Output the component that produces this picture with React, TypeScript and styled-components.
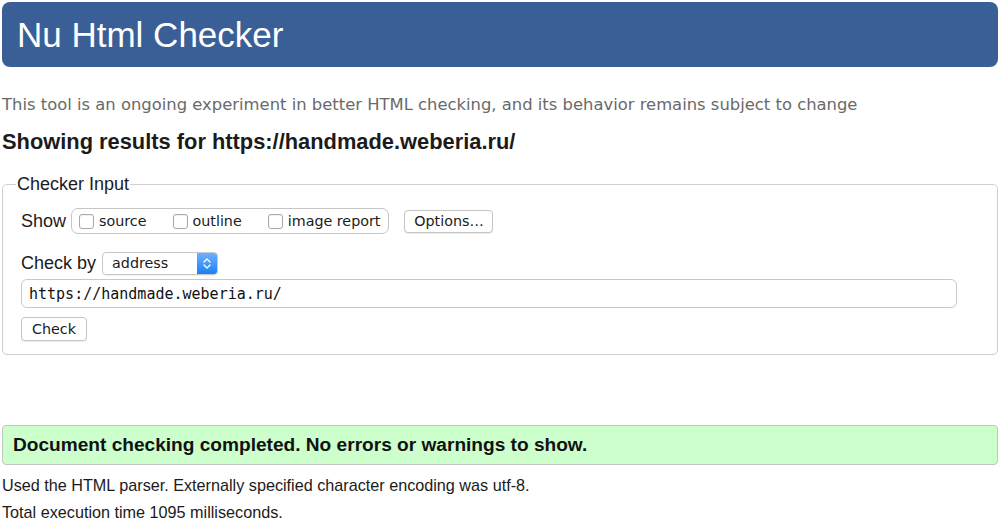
import React from "react";
import styled, { createGlobalStyle } from "styled-components";

const GlobalStyle = createGlobalStyle`
  html, body { margin: 0; padding: 0; background: #ffffff; }
  body {
    font-family: "Liberation Sans", Arial, Helvetica, sans-serif;
    color: #1b1b1b;
  }
  * { box-sizing: border-box; }
`;

const Page = styled.div`
  width: 1000px;
  padding: 2px 2px 0 2px;
`;

const Header = styled.header`
  height: 65px;
  background: #3a5f96;
  border-radius: 8px;
  display: flex;
  align-items: center;
  padding-left: 15px;
`;

const Title = styled.h1`
  margin: 0;
  font-size: 35px;
  line-height: 1;
  font-weight: normal;
  color: #ffffff;
`;

const Intro = styled.p`
  margin: 28px 0 0;
  font-family: "DejaVu Sans", Verdana, sans-serif;
  font-size: 16.4px;
  line-height: 20px;
  color: #6a6a6a;
`;

const Results = styled.h2`
  margin: 14px 0 0;
  font-size: 21.85px;
  line-height: 26px;
  font-weight: bold;
  color: #1b1b1b;
`;

const Fieldset = styled.fieldset`
  margin: 19px 0 0;
  padding: 0 18px 13px 18px;
  border: 1px solid #cfcfcf;
  border-radius: 5px;
  min-width: 0;
`;

const Legend = styled.legend`
  font-size: 18px;
  line-height: 20px;
  padding: 0 1px;
  margin-left: -5px;
  color: #1b1b1b;
`;

const Row = styled.div<{ $top: number }>`
  display: flex;
  align-items: center;
  height: 26px;
  margin-top: ${(p) => p.$top}px;
`;

const RowLabel = styled.span<{ $gap: number }>`
  font-size: 18px;
  margin-right: ${(p) => p.$gap}px;
  color: #1b1b1b;
`;

const CheckGroup = styled.div`
  display: inline-flex;
  align-items: center;
  gap: 26px;
  height: 26px;
  border: 1px solid #c6c6c6;
  border-radius: 7px;
  padding: 0 8px 0 7px;
`;

const CheckItem = styled.label`
  display: inline-flex;
  align-items: center;
  gap: 5px;
  font-family: "DejaVu Sans", Verdana, sans-serif;
  font-size: 14.3px;
  color: #1b1b1b;
`;

const Box = styled.input`
  appearance: none;
  -webkit-appearance: none;
  margin: 0;
  width: 15px;
  height: 15px;
  border: 1px solid #a8a8a8;
  border-radius: 3px;
  background: #ffffff;
  box-shadow: inset 0 1px 1px rgba(0, 0, 0, 0.06);
`;

const Button = styled.button<{ $w: number; $h: number }>`
  width: ${(p) => p.$w}px;
  height: ${(p) => p.$h}px;
  padding: 0;
  border: 1px solid #c5c5c5;
  border-radius: 4px;
  background: #ffffff;
  box-shadow: 0 1px 1px rgba(0, 0, 0, 0.08);
  font-family: "DejaVu Sans", Verdana, sans-serif;
  font-size: 14.3px;
  color: #1b1b1b;
`;

const OptionsButton = styled(Button)`
  margin-left: 15px;
`;

const SelectBox = styled.div`
  display: flex;
  width: 116px;
  height: 23px;
  border: 1px solid #c8c8c8;
  border-radius: 4px;
  overflow: hidden;
  box-shadow: 0 1px 1px rgba(0, 0, 0, 0.06);
`;

const SelectValue = styled.span`
  flex: 1;
  display: flex;
  align-items: center;
  padding-left: 9px;
  font-family: "DejaVu Sans", Verdana, sans-serif;
  font-size: 14.3px;
  color: #1b1b1b;
`;

const SelectArrow = styled.span`
  width: 20px;
  display: flex;
  align-items: center;
  justify-content: center;
  background: linear-gradient(#6db2fb, #1d7ff6);
`;

const UrlInput = styled.input`
  display: block;
  margin-top: 3px;
  width: 936px;
  height: 29px;
  padding: 0 7px;
  border: 1px solid #c8c8c8;
  border-radius: 6px;
  font-family: "DejaVu Sans Mono", Menlo, monospace;
  font-size: 15px;
  color: #111111;
  background: #ffffff;
  outline: none;
`;

const CheckButton = styled(Button)`
  display: block;
  margin-top: 9px;
`;

const Success = styled.div`
  margin-top: 70px;
  height: 40px;
  display: flex;
  align-items: center;
  padding: 0 10px;
  background: #ccffcc;
  border: 1px solid #bfc8bf;
  border-radius: 4px;
  font-size: 19.1px;
  font-weight: bold;
  color: #111111;
`;

const Info = styled.p<{ $top: number }>`
  margin: ${(p) => p.$top}px 0 0;
  font-size: 16.2px;
  line-height: 22px;
  color: #1b1b1b;
`;

export default function App() {
  return (
    <>
      <GlobalStyle />
      <Page>
        <Header>
          <Title>Nu Html Checker</Title>
        </Header>
        <Intro>
          This tool is an ongoing experiment in better HTML checking, and its behavior remains subject to change
        </Intro>
        <Results>Showing results for https://handmade.weberia.ru/</Results>
        <Fieldset>
          <Legend>Checker Input</Legend>
          <Row $top={14}>
            <RowLabel $gap={5}>Show</RowLabel>
            <CheckGroup>
              <CheckItem>
                <Box type="checkbox" />
                source
              </CheckItem>
              <CheckItem>
                <Box type="checkbox" />
                outline
              </CheckItem>
              <CheckItem>
                <Box type="checkbox" />
                image report
              </CheckItem>
            </CheckGroup>
            <OptionsButton $w={89} $h={23}>Options…</OptionsButton>
          </Row>
          <Row $top={16}>
            <RowLabel $gap={6}>Check by</RowLabel>
            <SelectBox>
              <SelectValue>address</SelectValue>
              <SelectArrow>
                <svg width="8" height="13" viewBox="0 0 8 13" fill="none">
                  <path d="M1 5 L4 2 L7 5" stroke="#fff" strokeWidth="1.4" strokeLinecap="round" strokeLinejoin="round" />
                  <path d="M1 8 L4 11 L7 8" stroke="#fff" strokeWidth="1.4" strokeLinecap="round" strokeLinejoin="round" />
                </svg>
              </SelectArrow>
            </SelectBox>
          </Row>
          <UrlInput type="text" defaultValue="https://handmade.weberia.ru/" />
          <CheckButton $w={66} $h={24}>Check</CheckButton>
        </Fieldset>
        <Success>Document checking completed. No errors or warnings to show.</Success>
        <Info $top={9}>Used the HTML parser. Externally specified character encoding was utf-8.</Info>
        <Info $top={5}>Total execution time 1095 milliseconds.</Info>
      </Page>
    </>
  );
}
